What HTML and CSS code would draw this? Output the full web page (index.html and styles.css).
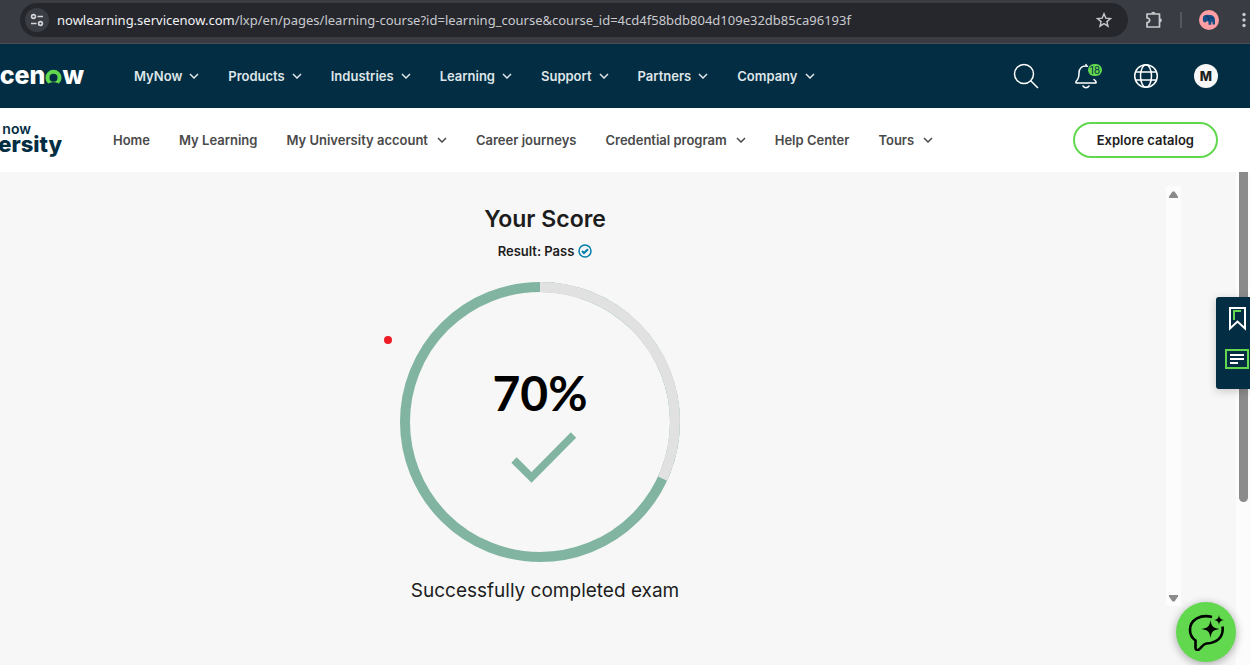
FILE: index.html
```html
<!DOCTYPE html>
<html lang="en">
<head>
<meta charset="utf-8">
<meta name="viewport" content="width=device-width, initial-scale=1">
<title>Your Score</title>
<link rel="stylesheet" href="styles.css">
</head>
<body>
<div class="browser-bar">
  <div class="address">
    <button class="site-info" aria-label="Site information">
      <svg width="14" height="14" viewBox="0 0 14 14" fill="none" stroke="#d5d6d9" stroke-width="1.6"><circle cx="3.5" cy="3.5" r="1.9"/><path d="M7.5 3.5H13M1 10.5h5.5"/><circle cx="10.5" cy="10.5" r="1.9"/></svg>
    </button>
    <span class="url"><span class="host">nowlearning.servicenow.com</span>/lxp/en/pages/learning-course?id=learning_course&amp;course_id=4cd4f58bdb804d109e32db85ca96193f</span>
    <button class="plain star" aria-label="Bookmark this tab">
      <svg width="16" height="16" viewBox="0 0 16 16" fill="none" stroke="#c9cacd" stroke-width="1.4"><path d="M8 1.8l1.8 4.3 4.7.4-3.600 3.100 1.100 4.600L8 11.700l-4 2.500 1.100-4.600L1.500 6.500l4.700-.4z"/></svg>
    </button>
  </div>
  <button class="plain" aria-label="Extensions">
    <svg width="18" height="18" viewBox="0 0 18 18" fill="none" stroke="#c9cacd" stroke-width="1.700" stroke-linejoin="round"><path d="M2 3h12.500v13H2v-4.500c3.500 0 3.500-4.500 0-4.500z"/><path d="M7 2.500c0-1.300 2.600-1.300 2.600 0M15 8c1.300 0 1.300 2.600 0 2.600" fill="#c9cacd"/></svg>
  </button>
  <span class="bar-divider"></span>
  <button class="plain" aria-label="Profile">
    <svg width="20" height="20" viewBox="0 0 20 20"><circle cx="10" cy="10" r="10" fill="#ff9fa4"/><path d="M4 7C5 5 7 4.500 9.500 5c3.500-.5 6.500 1 6.500 5v4.500h-2.500V12l-1.200-.2v3H9.500v-3L8 11l-1.500 1.500L4.500 12l-.7-2z" fill="#174e86"/><path d="M7.500 6.500c2 0 3 1 2.500 3.500M12 7l2 2" stroke="#0a2c55" fill="none"/></svg>
  </button>
  <button class="plain menu" aria-label="Browser menu">
    <svg width="4" height="16" viewBox="0 0 4 16" fill="#c9cacd"><circle cx="2" cy="2.500" r="1.700"/><circle cx="2" cy="8" r="1.700"/><circle cx="2" cy="13.500" r="1.700"/></svg>
  </button>
</div>

<header class="global-header">
  <a class="logo" href="#" aria-label="servicenow"><span>cen</span><svg width="17" height="15" viewBox="0 0 17 15"><path d="M3.300 14.800A8 8 0 1 1 13.700 14.800C11.500 12.800 5.500 12.800 3.300 14.800z" fill="#62d84e"/><circle cx="8.500" cy="8.800" r="4" fill="#032d42"/></svg><span>w</span><span class="logo-dot"></span></a>
  <nav class="main-nav" aria-label="Main">
    <button>MyNow<svg class="chevron" viewBox="0 0 10 6"><path d="M1 1l4 4 4-4"/></svg></button>
    <button>Products<svg class="chevron" viewBox="0 0 10 6"><path d="M1 1l4 4 4-4"/></svg></button>
    <button>Industries<svg class="chevron" viewBox="0 0 10 6"><path d="M1 1l4 4 4-4"/></svg></button>
    <button>Learning<svg class="chevron" viewBox="0 0 10 6"><path d="M1 1l4 4 4-4"/></svg></button>
    <button>Support<svg class="chevron" viewBox="0 0 10 6"><path d="M1 1l4 4 4-4"/></svg></button>
    <button>Partners<svg class="chevron" viewBox="0 0 10 6"><path d="M1 1l4 4 4-4"/></svg></button>
    <button>Company<svg class="chevron" viewBox="0 0 10 6"><path d="M1 1l4 4 4-4"/></svg></button>
  </nav>
  <div class="tools">
    <button class="plain" aria-label="Search"><svg width="26" height="26" viewBox="0 0 26 26" fill="none" stroke="#fff" stroke-width="1.500"><circle cx="11" cy="11" r="9.500"/><path d="M17.700 17.700L25 25"/></svg></button>
    <button class="plain bell" aria-label="Notifications"><svg width="24" height="26" viewBox="0 0 24 26" fill="none" stroke="#fff" stroke-width="1.500" stroke-linecap="round" stroke-linejoin="round"><path d="M12 3V1.500M13.500 3.200C8 2 5 5.500 5 10c0 5-.8 6.500-3 8.500V20h20v-1.500L20 16.500M9 23c1.500 2.300 4.500 2.300 6 0"/></svg><span class="badge">18</span></button>
    <button class="plain" aria-label="Language"><svg width="26" height="26" viewBox="0 0 26 26" fill="none" stroke="#fff" stroke-width="1.500"><circle cx="13" cy="13" r="11.300"/><ellipse cx="13" cy="13" rx="5.500" ry="11.300"/><path d="M2.800 9h20.400M2.800 17h20.400"/></svg></button>
    <button class="avatar" aria-label="Account">M</button>
  </div>
</header>

<div class="sub-header">
  <a class="university" href="#" aria-label="servicenow University"><span class="uni-small">now</span><span class="uni-large">ersity</span></a>
  <nav class="sub-nav" aria-label="University">
    <a href="#">Home</a>
    <a href="#">My Learning</a>
    <button>My University account<svg class="chevron" viewBox="0 0 10 6"><path d="M1 1l4 4 4-4"/></svg></button>
    <a href="#">Career journeys</a>
    <button>Credential program<svg class="chevron" viewBox="0 0 10 6"><path d="M1 1l4 4 4-4"/></svg></button>
    <a href="#">Help Center</a>
    <button>Tours<svg class="chevron" viewBox="0 0 10 6"><path d="M1 1l4 4 4-4"/></svg></button>
  </nav>
  <button class="explore">Explore catalog</button>
</div>

<div class="page">
  <main class="result">
    <h1>Your Score</h1>
    <p class="status">Result: Pass <svg width="14" height="14" viewBox="0 0 14 14"><circle cx="7" cy="7" r="6" fill="none" stroke="#007da8" stroke-width="1.500"/><path d="M4 7l2 2 4-3.800" fill="none" stroke="#007da8" stroke-width="2"/></svg></p>
    <div class="score">
      <svg class="ring" viewBox="0 0 280 280" fill="none" stroke-width="10">
        <circle cx="140" cy="140" r="135" stroke="#81b5a1"/>
        <path d="M140 5A135 135 0 0 1 262.500 196.600" stroke="#e1e1e1"/>
        <path d="M114 178l17.500 17.500L173.500 153" stroke="#81b5a1" stroke-width="7.500"/>
      </svg>
      <span class="percent">70%</span>
      <span class="pointer"></span>
    </div>
    <p class="message">Successfully completed exam</p>
  </main>
  <div class="frame-scroll" aria-hidden="true">
    <svg width="9" height="7" viewBox="0 0 9 7"><path d="M3.500.5h2L9 5.500V7H0V5.500z" fill="#8b8b8b"/></svg>
    <svg width="9" height="7" viewBox="0 0 9 7"><path d="M3.500 6.500h2L9 1.500V0H0v1.500z" fill="#8b8b8b"/></svg>
  </div>
  <div class="page-scroll" aria-hidden="true"><div class="thumb"></div></div>
</div>

<aside class="side-tools">
  <button class="plain" aria-label="Bookmarks"><svg width="17" height="24" viewBox="0 0 17 24" fill="none"><path d="M1 1h15v20.500l-7.500-7L1 21.500z" stroke="#fff" stroke-width="2"/><path d="M5 13V4h7" stroke="#62d84e" stroke-width="2"/></svg></button>
  <button class="plain" aria-label="Notes"><svg width="24" height="20" viewBox="0 0 24 20" fill="none"><path d="M1 1h22v18H1z" stroke="#62d84e" stroke-width="2"/><path d="M5 6h14M5 10h14M5 14h8" stroke="#fff" stroke-width="2"/></svg></button>
</aside>
<button class="assistant" aria-label="Virtual assistant">
  <svg width="38" height="38" viewBox="0 0 38 38"><path d="M25 4C14 1 3 6.500 3 17c0 5 2 8 5.500 10.500V35c0 2 2 2.500 3.500 1.500 3-2 3.500-5.500 7.500-6C29 30 37 25 35.500 13.500" fill="none" stroke="#000" stroke-width="2.600"/><path d="M23.500 7c1 6.500 2.500 8 9 9-6.500 1-8 2.500-9 9-1-6.500-2.500-8-9-9 6.500-1 8-2.500 9-9zM32 2c.6 3.500 1.500 4.400 5 5-3.500.6-4.400 1.500-5 5-.6-3.500-1.500-4.400-5-5 3.500-.6 4.400-1.500 5-5z"/></svg>
</button>
</body>
</html>
```
FILE: styles.css
```css
* { box-sizing: border-box; }

body {
  margin: 0;
  min-height: 100vh;
  display: flex;
  flex-direction: column;
  position: relative;
  overflow: hidden;
  background: #f7f7f7;
  color: #1d1d1d;
  font-family: Inter, "Liberation Sans", sans-serif;
  font-size: 13px;
}

button { font: inherit; color: inherit; border: 0; background: none; padding: 0; cursor: pointer; }
a { color: inherit; text-decoration: none; }
h1, p { margin: 0; }
svg { display: block; flex: none; }
.plain { display: flex; align-items: center; justify-content: center; }

.browser-bar {
  display: flex;
  align-items: center;
  height: 44px;
  padding: 0 4px 4px 20px;
  gap: 17px;
  background: #3a3c44;
  border-bottom: 1px solid #4b4d53;
}
.address {
  flex: 1;
  display: flex;
  align-items: center;
  height: 34px;
  padding: 0 16px 0 5px;
  border-radius: 17px;
  background: #25272d;
}
.site-info {
  display: flex;
  align-items: center;
  justify-content: center;
  width: 24px;
  height: 24px;
  border-radius: 12px;
  background: #3b3d44;
}
.url { flex: 1; margin-left: 8px; font-family: "Noto Sans", "Open Sans", sans-serif; color: #c9cacd; white-space: nowrap; }
.host { color: #f1f1f3; }
.bar-divider { width: 2px; height: 16px; background: #56585f; }
.menu { margin-left: 6px; }

.global-header {
  display: flex;
  align-items: center;
  height: 64px;
  padding-right: 32px;
  background: #032d42;
  color: #fff;
}
.logo {
  display: flex;
  justify-content: flex-end;
  align-items: center;
  width: 84px;
  padding-bottom: 2px;
  font-size: 25px;
  font-weight: 800;
  line-height: 28px;
}
.logo svg { margin-top: 3px; }
.logo-dot { width: 2px; height: 2px; margin-top: 13px; background: #8196a0; }
.main-nav, .sub-nav { display: flex; align-items: center; white-space: nowrap; font-weight: 600; }
.main-nav { margin-left: 50px; gap: 29px; color: #dfe6e9; }
.main-nav button, .sub-nav button { display: flex; align-items: center; gap: 7px; }
.chevron { width: 10px; height: 6px; fill: none; stroke: currentColor; stroke-width: 1.5; }
.tools { display: flex; align-items: center; gap: 35px; margin-left: auto; }
.bell { position: relative; }
.badge {
  position: absolute;
  top: 1px;
  left: 14px;
  width: 14px;
  height: 12px;
  border-radius: 6px;
  background: #62d84e;
  color: #032d42;
  font-size: 10px;
  line-height: 12px;
}
.avatar { width: 24px; height: 24px; border-radius: 12px; background: #f7f7f7; color: #1d1d1d; font-weight: 800; }

.sub-header {
  display: flex;
  align-items: center;
  height: 64px;
  padding-right: 32px;
  background: #fff;
}
.university {
  display: flex;
  flex-direction: column;
  align-items: flex-end;
  width: 62px;
  padding-bottom: 4px;
  color: #032d42;
  font-weight: 800;
}
.uni-small { padding-right: 31px; font-size: 14px; line-height: 12px; font-weight: 600; }
.uni-large { font-size: 22px; line-height: 18px; }
.sub-nav { margin-left: 51px; gap: 29px; color: #4a4a4a; }
.sub-nav button { gap: 9px; }
.explore {
  margin-left: auto;
  height: 36px;
  padding: 0 22px;
  border: 2px solid #62d84e;
  border-radius: 18px;
  font-weight: 600;
}

.page { flex: 1; display: flex; }
.result {
  flex: 1;
  display: flex;
  flex-direction: column;
  align-items: center;
  padding: 32px 76px 0 0;
}
h1 { font-size: 23px; line-height: 30px; font-weight: 600; }
.status { display: flex; align-items: center; gap: 4px; margin-top: 7px; line-height: 20px; font-weight: 600; }
.score { position: relative; width: 290px; margin-top: 21px; }
.ring { width: 280px; height: 280px; }
.percent {
  position: absolute;
  top: 81px;
  left: 0;
  width: 280px;
  color: #000;
  font-family: Lato, sans-serif;
  font-size: 48px;
  line-height: 60px;
  font-weight: 700;
  text-align: center;
}
.pointer { position: absolute; top: 54px; left: -16px; width: 8px; height: 8px; border-radius: 50%; background: #ed1c24; }
.message { margin-top: 15px; font-size: 19px; line-height: 28px; }
.frame-scroll {
  display: flex;
  flex-direction: column;
  justify-content: space-between;
  align-items: center;
  width: 15px;
  margin: 14px 55px 59px 0;
  padding: 5px 0 4px;
  background: #fcfcfc;
}
.page-scroll { width: 14px; padding-left: 3px; background: #fcfcfc; }
.thumb { width: 9px; height: 67%; border-radius: 0 0 5px 5px; background: #8b8b8b; }

.side-tools {
  position: absolute;
  top: 297px;
  right: 0;
  display: flex;
  flex-direction: column;
  gap: 18px;
  width: 34px;
  padding: 10px 1px 20px 9px;
  border-radius: 3px 0 0 3px;
  background: #032d42;
  box-shadow: 0 2px 10px #0003;
}
.assistant {
  position: absolute;
  right: 14px;
  bottom: 3px;
  display: flex;
  align-items: center;
  justify-content: center;
  width: 60px;
  height: 60px;
  border-radius: 50%;
  background: #62d84e;
  box-shadow: 0 2px 10px #0005;
}
```
